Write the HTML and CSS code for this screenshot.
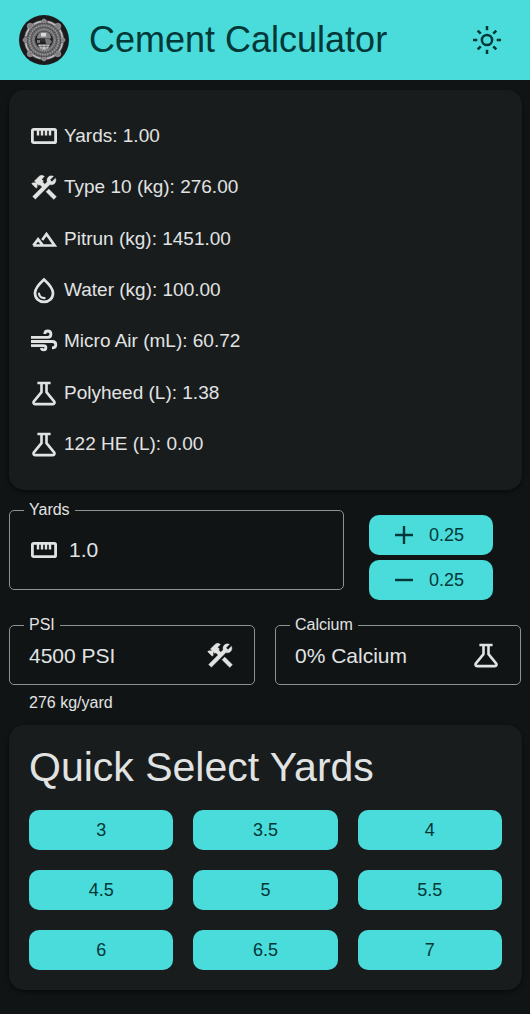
FILE: index.html
```html
<!DOCTYPE html>
<html lang="en">
<head>
<meta charset="utf-8">
<meta name="viewport" content="width=device-width, initial-scale=1">
<title>Cement Calculator</title>
<link rel="stylesheet" href="styles.css">
</head>
<body>
<svg class="sprite" aria-hidden="true">
  <symbol id="ruler" viewBox="0 0 30 30"><rect x="3.400" y="8.400" width="23.200" height="13.200" rx="1.200" fill="none" stroke="currentColor" stroke-width="2.800"/><path d="M9 9v5.600M13 9v5.600M17 9v5.600M21 9v5.600" fill="none" stroke="currentColor" stroke-width="2.400"/></symbol>
  <symbol id="tools" viewBox="0 0 23.4 23.4"><path fill="currentColor" stroke="currentColor" stroke-width=".3" d="M13.300 15.400l2.100-2.100 6 6-2.100 2.100zM17.500 10c1.930 0 3.500-1.570 3.500-3.500 0-.58-.16-1.120-.41-1.600l-2.700 2.700-1.490-1.490 2.700-2.700c-.48-.25-1.020-.41-1.600-.41C15.570 3 14 4.570 14 6.500c0 .41.08.8.21 1.160l-1.850 1.850-1.780-1.780.71-.71-1.410-1.410L12 3.490c-1.170-1.170-3.070-1.170-4.240 0L4.220 7.030l1.410 1.410H2.810l-.71.71 3.540 3.540.71-.71V9.150l1.410 1.410.71-.71 1.780 1.780-7.410 7.410 2.120 2.120L16.340 9.790c.36.13.75.21 1.160.21z"/></symbol>
  <symbol id="hills" viewBox="0 0 30 30"><path fill="none" stroke="currentColor" stroke-width="2.700" d="M4.300 21.500h21.300L17.500 10l-4.300 6M4.300 21.500l4.800-6.200 4.800 6.200"/></symbol>
  <symbol id="drop" viewBox="0 0 30 30"><path fill="none" stroke="currentColor" stroke-width="2.700" d="M15 4.500C9.500 9.500 6 13.700 6 18c0 5.400 4 8.900 9 8.900s9-3.500 9-8.900c0-4.300-3.500-8.500-9-13.500z"/><path fill="none" stroke="currentColor" stroke-width="2.200" stroke-linecap="round" d="M10 18.600c.4 2.800 2.600 4.500 5.600 4.500"/></symbol>
  <symbol id="wind" viewBox="0 0 30 30"><path fill="none" stroke="currentColor" stroke-width="2.800" d="M2 11.300h16.700c1.900 0 3.200-1.300 3.200-3.100S20.600 5 18.800 5c-1.700 0-3 1.100-3 2.900M2 15.500h21.200c2.200 0 3.600 1.400 3.600 3.200s-1.300 3.100-3.800 3.100M2 19.700h12.400c1.500 0 2.500.7 2.500 2s-.9 2.100-2.300 2.100c-1.300 0-2.100-.6-2.400-1.800"/></symbol>
  <symbol id="flask" viewBox="0 0 30 30"><path fill="none" stroke="currentColor" stroke-width="2.600" stroke-linejoin="round" d="M8.400 5h13.200M12.500 5v9.200L4.900 23.400c-1 1.300-.3 2.700 1.200 2.700h17.800c1.500 0 2.200-1.400 1.200-2.700l-7.600-9.200V5"/></symbol>
  <symbol id="plus" viewBox="0 0 30 30"><path fill="none" stroke="currentColor" stroke-width="2.400" d="M6 15h18M15 6v18"/></symbol>
  <symbol id="minus" viewBox="0 0 30 30"><path fill="none" stroke="currentColor" stroke-width="2.400" d="M6 15h18"/></symbol>
</svg>

<header class="app-bar">
  <svg class="logo" viewBox="0 0 50 50" aria-hidden="true">
    <circle cx="25" cy="25" r="25" fill="#1b1b1d"/>
    <circle cx="25" cy="25" r="20" fill="#6b6b6e"/>
    <g fill="#828285" stroke="#a8a8a8" stroke-width=".6">
      <circle cx="25" cy="6" r="2"/><circle cx="38.800" cy="11.200" r="3"/><circle cx="44" cy="25" r="2"/><circle cx="38.800" cy="38.800" r="3"/>
      <circle cx="25" cy="44" r="2"/><circle cx="11.200" cy="38.800" r="3"/><circle cx="6" cy="25" r="2"/><circle cx="11.200" cy="11.200" r="3"/>
    </g>
    <g fill="none">
      <circle cx="25" cy="25" r="18.600" stroke="#bdbdbd" stroke-width="1.500" stroke-dasharray="8 6.610" stroke-dashoffset="-3.300"/>
      <circle cx="25" cy="25" r="16.600" stroke="#444447" stroke-width="1.200" stroke-dasharray="1.500 1"/>
      <circle cx="25" cy="25" r="14.600" stroke="#9b9b9e" stroke-width="1.500" stroke-dasharray="1.400 1.200"/>
      <circle cx="25" cy="25" r="12.600" stroke="#4c4c4f" stroke-width="1.200" stroke-dasharray="1.500 1"/>
      <circle cx="25" cy="25" r="10.800" stroke="#98989b" stroke-width="1.500" stroke-dasharray="1 1"/>
    </g>
    <circle cx="25" cy="25" r="9" fill="#202023"/>
    <path d="M18 23.500c0-4.500 3-7 7-7s7 2.500 7 7z" fill="#858588"/>
    <path d="M22 18h5v3.500h-5z" fill="#d8d8d8"/>
    <path d="M18 25h3v3h-3zM26 24c3-1 6 0 7 3l-2 2h-4z" fill="#777"/>
    <path d="M21 23.500h5v3h-5z" fill="#303033"/>
    <path d="M19 29.500h12c-1 3.500-3 5.200-6 5.200s-5-1.700-6-5.200z" fill="#c4c4c4"/>
    <path d="M20 31.500h10M23 30v4M27 30v4" stroke="#666" stroke-width=".7"/>
  </svg>
  <h1 class="app-title">Cement Calculator</h1>
  <button class="theme-toggle" type="button" aria-label="Toggle theme">
    <svg class="sun" viewBox="-15 -15 30 30" fill="none" stroke="currentColor" stroke-width="2.500" aria-hidden="true">
      <circle r="5.100"/>
      <path d="M0-14v4.300M0 14V9.700M-14 0h4.300M14 0H9.700M-9.300-9.300l3 3M9.300-9.300l-3 3M-9.300 9.300l3-3M9.300 9.300l-3-3"/>
    </svg>
  </button>
</header>

<main class="content">
  <section class="card">
    <ul class="results">
      <li class="result"><svg class="icon"><use href="#ruler"/></svg><span>Yards: 1.00</span></li>
      <li class="result"><svg class="icon"><use href="#tools"/></svg><span>Type 10 (kg): 276.00</span></li>
      <li class="result"><svg class="icon"><use href="#hills"/></svg><span>Pitrun (kg): 1451.00</span></li>
      <li class="result"><svg class="icon"><use href="#drop"/></svg><span>Water (kg): 100.00</span></li>
      <li class="result"><svg class="icon"><use href="#wind"/></svg><span>Micro Air (mL): 60.72</span></li>
      <li class="result"><svg class="icon"><use href="#flask"/></svg><span>Polyheed (L): 1.38</span></li>
      <li class="result"><svg class="icon"><use href="#flask"/></svg><span>122 HE (L): 0.00</span></li>
    </ul>
  </section>

  <div class="yards-row">
    <fieldset class="field">
      <legend class="field-legend"><label for="yards">Yards</label></legend>
      <div class="field-body field-body-tall">
        <svg class="icon"><use href="#ruler"/></svg>
        <input class="control" id="yards" type="text" inputmode="decimal" value="1.0">
      </div>
    </fieldset>
    <div class="steppers">
      <button class="btn btn-step" type="button" aria-label="Add 0.25"><svg class="icon"><use href="#plus"/></svg>0.25</button>
      <button class="btn btn-step" type="button" aria-label="Subtract 0.25"><svg class="icon"><use href="#minus"/></svg>0.25</button>
    </div>
  </div>

  <div class="mix-row">
    <div class="mix-cell">
      <fieldset class="field">
        <legend class="field-legend"><label for="psi">PSI</label></legend>
        <div class="field-body">
          <select class="control" id="psi" aria-describedby="psi-hint"><option>4500 PSI</option></select>
          <svg class="icon"><use href="#tools"/></svg>
        </div>
      </fieldset>
      <p class="hint" id="psi-hint">276 kg/yard</p>
    </div>
    <div class="mix-cell">
      <fieldset class="field">
        <legend class="field-legend"><label for="calcium">Calcium</label></legend>
        <div class="field-body">
          <select class="control" id="calcium"><option>0% Calcium</option></select>
          <svg class="icon"><use href="#flask"/></svg>
        </div>
      </fieldset>
    </div>
  </div>

  <section class="card">
    <h2 class="card-title">Quick Select Yards</h2>
    <div class="quick-grid">
      <button class="btn" type="button">3</button>
      <button class="btn" type="button">3.5</button>
      <button class="btn" type="button">4</button>
      <button class="btn" type="button">4.5</button>
      <button class="btn" type="button">5</button>
      <button class="btn" type="button">5.5</button>
      <button class="btn" type="button">6</button>
      <button class="btn" type="button">6.5</button>
      <button class="btn" type="button">7</button>
    </div>
  </section>
</main>
</body>
</html>
```
FILE: styles.css
```css
:root {
  --bg: #101415;
  --surface: #191c1d;
  --text: #e1e3e3;
  --outline: #899392;
  --primary: #4adbdb;
  --on-primary: #003737;
}

* {
  box-sizing: border-box;
}

body {
  margin: 0;
  background: var(--bg);
  color: var(--text);
  font-family: "Liberation Sans", Arial, sans-serif;
  font-size: 19px;
}

.sprite {
  display: none;
}

.app-bar {
  display: flex;
  align-items: center;
  gap: 20px;
  min-height: 80px;
  padding: 0 23px 0 19px;
  background: var(--primary);
  color: var(--on-primary);
}

.logo {
  flex: none;
  width: 50px;
  height: 50px;
}

.app-title {
  flex: 1;
  margin: 0;
  font-size: 36px;
  font-weight: 400;
  line-height: 40px;
}

.theme-toggle {
  display: flex;
  align-items: center;
  justify-content: center;
  width: 40px;
  height: 40px;
  padding: 0;
  border: 0;
  background: none;
  color: inherit;
}

.sun,
.icon {
  flex: none;
  width: 30px;
  height: 30px;
}

.content {
  display: flex;
  flex-direction: column;
  padding: 10px 8px 24px 9px;
}

.card {
  padding: 20px;
  border-radius: 15px;
  background: var(--surface);
  box-shadow: 0 2px 4px rgba(0, 0, 0, 0.5);
}

.results {
  display: grid;
  grid-auto-rows: 1fr;
  min-height: 360px;
  margin: 0;
  padding: 0;
  list-style: none;
}

.result {
  display: flex;
  align-items: center;
  gap: 5px;
}

.yards-row {
  display: flex;
  align-items: flex-start;
  margin-top: 10px;
}

.yards-row .field {
  flex: 1;
}

.steppers {
  display: flex;
  flex-direction: column;
  gap: 5px;
  width: 178px;
  padding: 15px 29px 0 25px;
}

.field {
  min-width: 0;
  margin: 0;
  padding: 0 19px 9px;
  border: 1px solid var(--outline);
  border-radius: 5px;
}

.field-legend {
  margin-left: -5px;
  padding: 0 5px;
  font-size: 16px;
  line-height: 20px;
}

.field-body {
  display: flex;
  align-items: center;
  gap: 10px;
  min-height: 40px;
}

.field-body-tall {
  min-height: 60px;
}

.control {
  flex: 1;
  min-width: 0;
  height: 40px;
  padding: 0;
  border: 0;
  outline: 0;
  appearance: none;
  background: transparent;
  color: inherit;
  font-family: inherit;
  font-size: 21px;
}

.mix-row {
  display: grid;
  grid-template-columns: 1fr 1fr;
  gap: 20px;
  margin: 15px 1px 12px 0;
}

.hint {
  margin: 8px 20px 0;
  font-size: 16px;
  line-height: 20px;
}

.btn {
  display: flex;
  align-items: center;
  justify-content: center;
  height: 40px;
  padding: 0;
  border: 0;
  border-radius: 10px;
  background: var(--primary);
  color: var(--on-primary);
  font-family: inherit;
  font-size: 18px;
}

.btn-step {
  justify-content: flex-start;
  gap: 10px;
  padding: 0 20px;
}

.card-title {
  margin: 0 0 20px;
  font-size: 41px;
  font-weight: 400;
  line-height: 45px;
}

.quick-grid {
  display: grid;
  grid-template-columns: repeat(3, 1fr);
  gap: 20px;
}
```
